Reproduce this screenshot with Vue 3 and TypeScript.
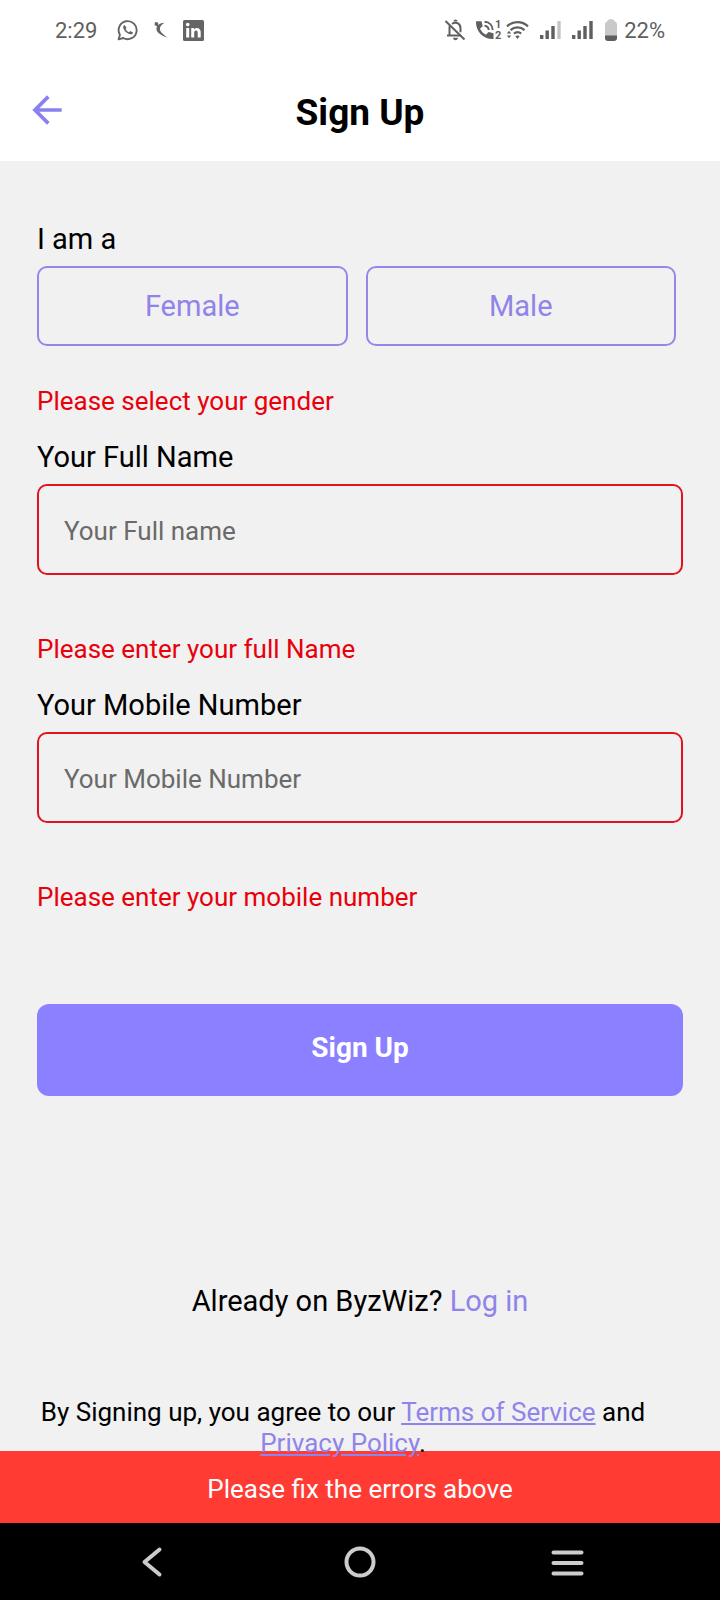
<script setup lang="ts">
import { ref } from 'vue'

interface Field {
  id: string
  label: string
  placeholder: string
  type: string
  error: string
}

const genders: string[] = ['Female', 'Male']
const gender = ref<string>('')

const fields: Field[] = [
  {
    id: 'full-name',
    label: 'Your Full Name',
    placeholder: 'Your Full name',
    type: 'text',
    error: 'Please enter your full Name',
  },
  {
    id: 'mobile-number',
    label: 'Your Mobile Number',
    placeholder: 'Your Mobile Number',
    type: 'tel',
    error: 'Please enter your mobile number',
  },
]
const values = ref<Record<string, string>>({ 'full-name': '', 'mobile-number': '' })
</script>

<template>
  <div class="screen">
    <div class="status">
      <span class="time">2:29</span>
      <svg class="chat" width="22" height="22" viewBox="0 0 22 22" fill="none">
        <path d="M1.6 20.4 2.9 15.7A9 9 0 1 1 6.3 19Z" stroke="#656565" stroke-width="1.9" stroke-linejoin="round" />
        <path d="M7.6 5.9c-.9.2-1.6 1.3-1.4 2.6.5 3.1 4.1 6.5 7.3 6.8 1.3.1 2.4-.7 2.5-1.9l-2.8-1.5-1.2 1.3c-1.5-.6-2.7-1.8-3.4-3.3l1-1.2Z" fill="#656565" />
      </svg>
      <svg class="swoosh" width="14" height="18" viewBox="0 0 14 18" fill="none">
        <circle cx="2.4" cy="3" r="1.9" fill="#656565" />
        <path d="M10.5 1.8C5.5 2 2 4.8 2.500 8.5c.5 3.700 5 5.700 10.700 8.300C10 13.500 6.200 11.500 5.900 8.500 5.600 6 7.500 3.500 10.500 1.800Z" fill="#656565" />
        <path d="M2.4 3 4.5 6" stroke="#656565" stroke-width="1.500" />
      </svg>
      <svg class="linked" width="21" height="21" viewBox="0 0 21 21">
        <rect width="21" height="21" rx="1.5" fill="#656565" />
        <circle cx="4.7" cy="4.6" r="1.8" fill="#fff" />
        <path d="M3.2 8h3v9.5h-3ZM8.2 8H11v1.4c1.6-2.5 6.7-2.1 6.7 2.7v5.4h-3v-5c0-2.8-3.5-2.6-3.5 0v5h-3Z" fill="#fff" />
      </svg>
      <span class="spacer"></span>
      <svg class="bell" width="22" height="22" viewBox="0 0 22 22" fill="none" stroke="#5f5f5f">
        <path d="M5.5 7.5V16M3 16.5h13.5M8 4.8c4.5-2.8 8.5.4 8.5 4.4v4M5.5 9c0-1 .2-2 .8-2.8" stroke-width="2" />
        <path d="M1.5 2 20.5 20.5" stroke-width="2" />
        <path d="M9.5 2.5a2 2 0 0 1 4 0ZM9 18.7h5a2.5 2.5 0 0 1-5 0Z" fill="#5f5f5f" stroke="none" />
      </svg>
      <svg class="call" width="27" height="22" viewBox="0 0 27 22" fill="none">
        <path d="M1 2.2h5.500l1.200 5-2.700 2.600c1.400 2.700 3.200 4.500 5.900 5.900l2.600-2.600 5 1.200V20C8.500 20.500.5 12.500 1 2.200Z" fill="#5f5f5f" />
        <path d="M9.5 2.800c4.800.2 8 3.400 8.200 8.200M9.500 6.800c2.700.2 4 1.500 4.200 4.200" stroke="#5f5f5f" stroke-width="1.9" />
        <text x="20" y="9" class="sim">1</text>
        <text x="20" y="20" class="sim">2</text>
      </svg>
      <svg class="wifi" width="23" height="20" viewBox="0 0 23 20" fill="none" stroke="#5f5f5f" stroke-width="2.3">
        <path d="M1 6.300C7 .8 16 .8 22 6.300M4.500 10.200c4-3.700 10-3.700 14 0M8 13.600c2.200-1.800 5-1.800 7.200 0" />
        <path d="m11.500 19-2.200-2.700q2.200-1.500 4.400 0ZM.8 13.500 3 10.800l2.200 2.700ZM.8 15.500h4.400L3 18.200Z" fill="#5f5f5f" stroke="none" />
      </svg>
      <svg class="signal" width="21" height="20" viewBox="0 0 21 20" fill="#5f5f5f">
        <path d="M0 15h3.4v4H0ZM5.500 10.500h3.400V19H5.500ZM11.300 6h3.400v13h-3.400Z" />
        <path d="M17.300 1h3.400v18h-3.400Z" fill="#c4c4c4" />
      </svg>
      <svg class="signal" width="21" height="20" viewBox="0 0 21 20" fill="#5f5f5f">
        <path d="M0 15h3.4v4H0ZM5.500 10.500h3.400V19H5.500ZM11.300 6h3.400v13h-3.400ZM17.300 1h3.400v18h-3.400Z" />
      </svg>
      <svg class="battery" width="12" height="22" viewBox="0 0 12 22">
        <path d="M0 5q0-2 2-2.500Q3 0 6 0t4 2.500q2 .5 2 2.500v12H0Z" fill="#c9c9c9" />
        <path d="M0 16.500h12V19q0 3-3 3H3q-3 0-3-3Z" fill="#5f5f5f" />
      </svg>
      <span>22%</span>
    </div>

    <header class="header">
      <button class="back" type="button" aria-label="Back">
        <svg width="44" height="44" viewBox="0 0 24 24" fill="#8b80f0">
          <path d="M20 11H7.83l5.59-5.59L12 4l-8 8 8 8 1.41-1.41L7.83 13H20v-2z" />
        </svg>
      </button>
      <h1>Sign Up</h1>
    </header>

    <form class="form" novalidate @submit.prevent>
      <div class="group-label" id="gender-label">I am a</div>
      <div class="genders" role="group" aria-labelledby="gender-label">
        <button
          v-for="g in genders"
          :key="g"
          class="gender"
          type="button"
          :aria-pressed="gender === g"
          @click="gender = g"
        >
          {{ g }}
        </button>
      </div>
      <p class="error gender-error">Please select your gender</p>

      <div v-for="f in fields" :key="f.id" class="field">
        <label :for="f.id">{{ f.label }}</label>
        <input :id="f.id" v-model="values[f.id]" :type="f.type" :placeholder="f.placeholder" />
        <p class="error">{{ f.error }}</p>
      </div>

      <button class="submit" type="submit">Sign Up</button>

      <p class="login">Already on ByzWiz? <a href="#login">Log in</a></p>
      <p class="terms">
        By Signing up, you agree to our <a href="#terms">Terms of Service</a> and
        <a href="#privacy">Privacy Policy</a>.
      </p>
    </form>

    <div class="banner" role="alert">Please fix the errors above</div>

    <nav class="nav">
      <button type="button" aria-label="Back">
        <svg width="36" height="36" viewBox="0 0 36 36"><path d="M25.5 5.5 10.5 18l15 12.5" /></svg>
      </button>
      <button type="button" aria-label="Home">
        <svg width="36" height="36" viewBox="0 0 36 36"><circle cx="18" cy="18" r="13.5" /></svg>
      </button>
      <button type="button" aria-label="Recent apps">
        <svg width="36" height="36" viewBox="0 0 36 36"><path d="M3.5 8.500h28M3.500 19h28M3.500 29.500h28" /></svg>
      </button>
    </nav>
  </div>
</template>

<style>
body {
  margin: 0;
  background: #f1f1f1;
}
</style>

<style scoped>
.screen {
  display: flex;
  flex-direction: column;
  min-height: 100vh;
  background: #f1f1f1;
  color: #000;
  font-family: Roboto, 'Liberation Sans', sans-serif;
}
button,
input {
  box-sizing: border-box;
  margin: 0;
  font-family: inherit;
}
button {
  padding: 0;
  border: 0;
  background: none;
  cursor: pointer;
}
p,
h1 {
  margin: 0;
}
svg {
  display: block;
}
a {
  color: #8f84ea;
}
.status {
  display: flex;
  align-items: center;
  height: 60px;
  padding: 0 55px;
  background: #fff;
  color: #606060;
  font-size: 22px;
}
.chat {
  margin-left: 20px;
}
.swoosh {
  margin-left: 15px;
}
.linked {
  margin-left: 15px;
}
.spacer {
  flex: 1;
}
.call {
  margin-left: 9px;
}
.sim {
  fill: #5f5f5f;
  font-size: 11px;
  font-weight: 700;
}
.wifi {
  margin-left: 4px;
}
.signal {
  margin-left: 11px;
}
.battery {
  margin: 0 7px 0 12px;
}
.header {
  display: grid;
  grid-template-columns: 44px 1fr 44px;
  align-items: center;
  height: 101px;
  padding: 0 25px;
  background: #fff;
}
.back {
  padding-bottom: 2px;
}
.header h1 {
  font-size: 37px;
  line-height: 44px;
  padding-top: 4px;
  text-align: center;
}
.form {
  display: flex;
  flex-direction: column;
  padding: 60px 37px 0;
  position: relative;
  z-index: 1;
}
.group-label,
.field label {
  font-size: 29px;
  line-height: 36px;
}
.genders {
  display: flex;
  gap: 18px;
  margin: 9px 7px 0 0;
}
.gender {
  flex: 1;
  height: 80px;
  border: 2px solid #9388ea;
  border-radius: 10px;
  color: #8f84ea;
  font-size: 29px;
}
.error {
  color: #e8000a;
  font-size: 26px;
  line-height: 32px;
}
.gender-error {
  margin-top: 39px;
}
.field {
  display: flex;
  flex-direction: column;
  margin-top: 22px;
}
.field input {
  width: 100%;
  height: 91px;
  margin: 9px 0 58px;
  padding: 3px 25px 0;
  border: 2px solid #e0141c;
  border-radius: 10px;
  background: transparent;
  color: #000;
  font-size: 26px;
}
.field input::placeholder {
  color: #6a6a6a;
  opacity: 1;
}
.submit {
  height: 92px;
  margin-top: 91px;
  padding-bottom: 6px;
  border-radius: 12px;
  background: #8b80ff;
  color: #fff;
  font-size: 28px;
  font-weight: 700;
}
.login {
  margin-top: 187px;
  font-size: 29px;
  line-height: 36px;
  text-align: center;
}
.login a {
  text-decoration: none;
}
.terms {
  margin: 78px 34px 0 0;
  font-size: 26px;
  line-height: 31px;
  text-align: center;
}
.banner {
  margin-top: -8px;
  padding: 22px 20px 18px;
  background: #ff3b33;
  color: #fff;
  font-size: 26px;
  line-height: 32px;
  text-align: center;
}
.nav {
  display: grid;
  flex: 1;
  grid-template-columns: repeat(3, 1fr);
  place-items: center;
  min-height: 76px;
  padding: 0 48px;
  background: #000;
}
.nav svg {
  fill: none;
  stroke: #ccc;
  stroke-width: 4px;
  stroke-linecap: round;
  stroke-linejoin: round;
}
</style>
